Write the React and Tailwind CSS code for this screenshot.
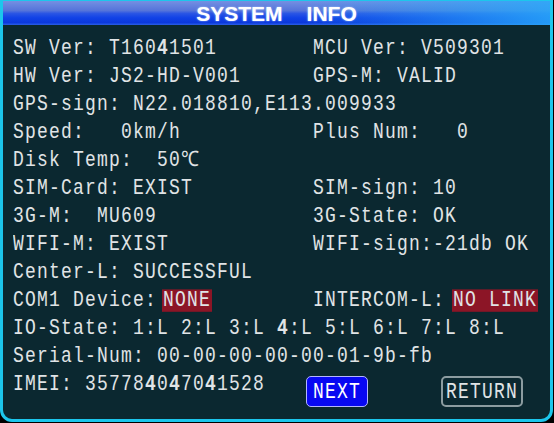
import React from "react";

const mono = { fontFamily: '"Liberation Mono", "DejaVu Sans Mono", monospace' };

function T({ s }) {
  const parts = s.split("4");
  return (
    <>
      {parts.map((p, i) => (
        <React.Fragment key={i}>
          {p}
          {i < parts.length - 1 && <span className="font-bold">4</span>}
        </React.Fragment>
      ))}
    </>
  );
}

function Row({ left, right }) {
  return (
    <div className="flex h-[28px] items-center whitespace-pre [transform:scaleY(1.18)]">
      <div className={right !== undefined ? "w-[300px] shrink-0" : ""}>{left}</div>
      {right !== undefined && <div>{right}</div>}
    </div>
  );
}

export default function App() {
  return (
    <div className="w-[554px] h-[423px] bg-black overflow-hidden">
      <div className="w-[553px] h-[422px] border-[3px] border-t border-[#1cc6ec] rounded-b-[12px] bg-[#0b2830] overflow-hidden flex flex-col">
        <div className="relative h-[24px] shrink-0 bg-[linear-gradient(to_bottom,#7490e2_0%,#5574da_40%,#2a55e4_52%,#1142e6_70%,#0b38dc_90%,#2b5fe6_100%)]">
          <div className="absolute inset-0 bg-[linear-gradient(to_right,rgba(40,170,250,0)_55%,rgba(40,170,250,0.85)_100%)]" />
          <div
            className="relative flex h-full items-center justify-center gap-[24px] text-white font-bold text-[21px] leading-none [text-shadow:0_0_2px_rgba(200,220,255,0.8)]"
            style={{ fontFamily: '"Liberation Sans", Arial, sans-serif' }}
          >
            <span>SYSTEM</span>
            <span>INFO</span>
          </div>
        </div>
        <div className="pt-[9px] pl-[10px] text-[18px] tracking-[1.2px] leading-[28px] text-[#e0e4e6]" style={mono}>
          <Row left={<T s="SW Ver: T16041501" />} right="MCU Ver: V509301" />
          <Row left="HW Ver: JS2-HD-V001" right="GPS-M: VALID" />
          <Row left="GPS-sign: N22.018810,E113.009933" />
          <Row left="Speed:   0km/h" right="Plus Num:   0" />
          <Row left="Disk Temp:  50℃" />
          <Row left="SIM-Card: EXIST" right="SIM-sign: 10" />
          <Row left="3G-M:  MU609" right="3G-State: OK" />
          <Row left="WIFI-M: EXIST" right="WIFI-sign:-21db OK" />
          <Row left="Center-L: SUCCESSFUL" />
          <Row
            left={
              <span>
                COM1 Device:
                <span className="ml-[5px] px-[1px] bg-[#8c1526] inline-block leading-[19px]">NONE</span>
              </span>
            }
            right={
              <span>
                INTERCOM-L:
                <span className="ml-[7px] px-[1px] bg-[#8c1526] inline-block leading-[19px]">NO LINK</span>
              </span>
            }
          />
          <Row left={<T s="IO-State: 1:L 2:L 3:L 4:L 5:L 6:L 7:L 8:L" />} />
          <Row left="Serial-Num: 00-00-00-00-00-01-9b-fb" />
          <div className="flex items-start h-[28px] whitespace-pre">
            <div className="w-[293px] shrink-0 [transform:scaleY(1.18)]">
              <T s="IMEI: 357784047041528" />
            </div>
            <div className="mt-[6px] w-[62px] h-[31px] shrink-0 rounded-[5px] border-[1.5px] border-[#b4b4ff] bg-[#0808f2] flex items-center justify-center text-white">
              <span className="[transform:scaleY(1.18)]">NEXT</span>
            </div>
            <div className="mt-[6px] ml-[73px] w-[82px] h-[31px] shrink-0 rounded-[5px] border-2 border-[#8c9ca0] flex items-center justify-center text-[#e0e4e6]">
              <span className="[transform:scaleY(1.18)]">RETURN</span>
            </div>
          </div>
        </div>
      </div>
    </div>
  );
}
